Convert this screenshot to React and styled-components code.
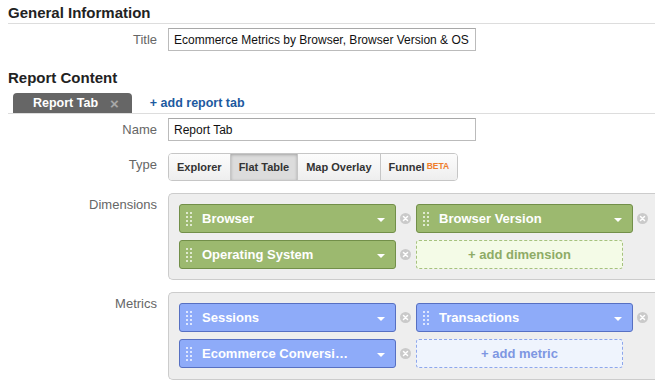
import React from "react";
import styled, { createGlobalStyle } from "styled-components";

const Global = createGlobalStyle`
  html, body { margin: 0; padding: 0; background: #fff; overflow: hidden; }
  body { font-family: "Liberation Sans", Arial, sans-serif; color: #222; }
  * { box-sizing: border-box; }
`;

const Page = styled.div`
  padding-left: 8px;
`;

const SectionTitle = styled.h2`
  margin: ${(p) => p.$top}px 0 0;
  font-size: 15px;
  line-height: 18px;
  font-weight: bold;
  color: #222;
  padding-bottom: ${(p) => (p.$rule ? 1 : 0)}px;
  border-bottom: ${(p) => (p.$rule ? "1px solid #ddd" : "none")};
`;

const FormRow = styled.div`
  display: grid;
  grid-template-columns: 149px 1fr;
  column-gap: 11px;
  align-items: start;
  margin-top: ${(p) => p.$top}px;
`;

const Label = styled.div`
  text-align: right;
  font-size: 13px;
  line-height: 16px;
  padding-top: 4px;
  color: #666;
`;

const TextInput = styled.input`
  width: 308px;
  height: 23px;
  border: 1px solid #bbb;
  border-top-color: #a8a8a8;
  padding: 0 5px;
  font-family: "Liberation Sans", Arial, sans-serif;
  font-size: 12px;
  color: #111;
  outline: none;
  background: #fff;
`;

const TabBar = styled.div`
  margin-top: 6px;
  display: flex;
  align-items: center;
  height: 21px;
  border-bottom: 1px solid #ddd;
  padding-left: 5px;
`;

const Tab = styled.div`
  height: 20px;
  align-self: flex-end;
  display: flex;
  align-items: center;
  background: #666;
  border-radius: 4px 4px 0 0;
  padding: 0 13px 0 20px;
  color: #fff;
  font-weight: bold;
  font-size: 12.5px;
`;

const TabClose = styled.span`
  margin-left: 12px;
  color: #a8a8a8;
  font-size: 15px;
  font-weight: bold;
  line-height: 1;
`;

const AddLink = styled.a`
  margin-left: 18px;
  color: #1c5aa0;
  font-weight: bold;
  font-size: 12.5px;
  text-decoration: none;
`;

const ButtonGroup = styled.div`
  display: inline-flex;
  border: 1px solid #c6c6c6;
  border-radius: 4px;
  overflow: hidden;
`;

const TypeButton = styled.div`
  height: 26px;
  display: flex;
  align-items: center;
  padding: 0 8px;
  font-size: 11px;
  font-weight: bold;
  color: #333;
  border-left: ${(p) => (p.$first ? "none" : "1px solid #c6c6c6")};
  background: ${(p) =>
    p.$active ? "#dcdcdc" : "linear-gradient(#fcfcfc, #eeeeee)"};
  box-shadow: ${(p) => (p.$active ? "inset 0 1px 3px rgba(0,0,0,0.25)" : "none")};
`;

const Beta = styled.sup`
  color: #ef7d2b;
  font-size: 8.5px;
  margin-left: 2px;
  position: relative;
  top: -1px;
`;

const Panel = styled.div`
  background: #eeeeee;
  border: 1px solid #cccccc;
  border-right: none;
  border-radius: 5px 0 0 5px;
  padding: 10px 0 ${(p) => p.$bottom}px 10px;
  display: grid;
  grid-template-columns: repeat(2, 232px);
  column-gap: 5px;
  row-gap: 7px;
`;

const Cell = styled.div`
  display: flex;
  align-items: center;
  gap: 4px;
`;

const Pill = styled.div`
  width: 217px;
  height: 29px;
  display: flex;
  align-items: center;
  padding: 0 10px 0 6px;
  border-radius: 3px;
  border: 1px solid ${(p) => p.$border};
  background: ${(p) => p.$bg};
  color: #fff;
  font-size: 13px;
  font-weight: bold;
`;

const PillText = styled.span`
  margin-left: 10px;
  white-space: nowrap;
`;

const Arrow = styled.span`
  margin-left: auto;
  width: 0;
  height: 0;
  border-left: 4px solid transparent;
  border-right: 4px solid transparent;
  border-top: 4px solid #fff;
  margin-top: 2px;
`;

const AddButton = styled.div`
  width: 207px;
  height: 29px;
  display: flex;
  align-items: center;
  justify-content: center;
  border: 1px dashed ${(p) => p.$border};
  border-radius: 3px;
  background: ${(p) => p.$bg};
  color: ${(p) => p.$color};
  font-size: 13px;
  font-weight: bold;
`;

const Grip = ({ color }) => (
  <svg width="6" height="14" viewBox="0 0 6 14">
    {[0, 4, 8, 12].map((y) =>
      [0, 4].map((x) => (
        <rect key={`${x}-${y}`} x={x} y={y} width="2" height="2" fill={color} />
      ))
    )}
  </svg>
);

const Remove = () => (
  <svg width="11" height="11" viewBox="0 0 11 11">
    <circle cx="5.5" cy="5.5" r="5.5" fill="#cacaca" />
    <path d="M3.5 3.5 L7.5 7.5 M7.5 3.5 L3.5 7.5" stroke="#fff" strokeWidth="1.5" strokeLinecap="round" />
  </svg>
);

const themes = {
  green: { bg: "#9cb96f", border: "#728f49", dot: "#dfe9cf", addBg: "#f4fbe7", addBorder: "#a6c27e", addColor: "#8eab66" },
  blue: { bg: "#8eabf9", border: "#5770c2", dot: "#dde6fe", addBg: "#eff4fd", addBorder: "#8ea7ec", addColor: "#7e97e2" },
};

const ItemPill = ({ t, children }) => (
  <Cell>
    <Pill $bg={t.bg} $border={t.border}>
      <Grip color={t.dot} />
      <PillText>{children}</PillText>
      <Arrow />
    </Pill>
    <Remove />
  </Cell>
);

export default function App() {
  const g = themes.green;
  const b = themes.blue;
  return (
    <>
      <Global />
      <Page>
        <SectionTitle $top={4} $rule>General Information</SectionTitle>
        <FormRow $top={4}>
          <Label>Title</Label>
          <TextInput readOnly value="Ecommerce Metrics by Browser, Browser Version & OS" />
        </FormRow>

        <SectionTitle $top={18}>Report Content</SectionTitle>
        <TabBar>
          <Tab>
            Report Tab<TabClose>×</TabClose>
          </Tab>
          <AddLink href="#">+ add report tab</AddLink>
        </TabBar>

        <FormRow $top={4}>
          <Label>Name</Label>
          <TextInput readOnly value="Report Tab" />
        </FormRow>

        <FormRow $top={12}>
          <Label>Type</Label>
          <div>
            <ButtonGroup>
              <TypeButton $first>Explorer</TypeButton>
              <TypeButton $active>Flat Table</TypeButton>
              <TypeButton>Map Overlay</TypeButton>
              <TypeButton>
                Funnel<Beta>BETA</Beta>
              </TypeButton>
            </ButtonGroup>
          </div>
        </FormRow>

        <FormRow $top={12}>
          <Label>Dimensions</Label>
          <Panel $bottom={10}>
            <ItemPill t={g}>Browser</ItemPill>
            <ItemPill t={g}>Browser Version</ItemPill>
            <ItemPill t={g}>Operating System</ItemPill>
            <Cell>
              <AddButton $bg={g.addBg} $border={g.addBorder} $color={g.addColor}>
                + add dimension
              </AddButton>
            </Cell>
          </Panel>
        </FormRow>

        <FormRow $top={12}>
          <Label>Metrics</Label>
          <Panel $bottom={11}>
            <ItemPill t={b}>Sessions</ItemPill>
            <ItemPill t={b}>Transactions</ItemPill>
            <ItemPill t={b}>Ecommerce Conversi…</ItemPill>
            <Cell>
              <AddButton $bg={b.addBg} $border={b.addBorder} $color={b.addColor}>
                + add metric
              </AddButton>
            </Cell>
          </Panel>
        </FormRow>
      </Page>
    </>
  );
}
